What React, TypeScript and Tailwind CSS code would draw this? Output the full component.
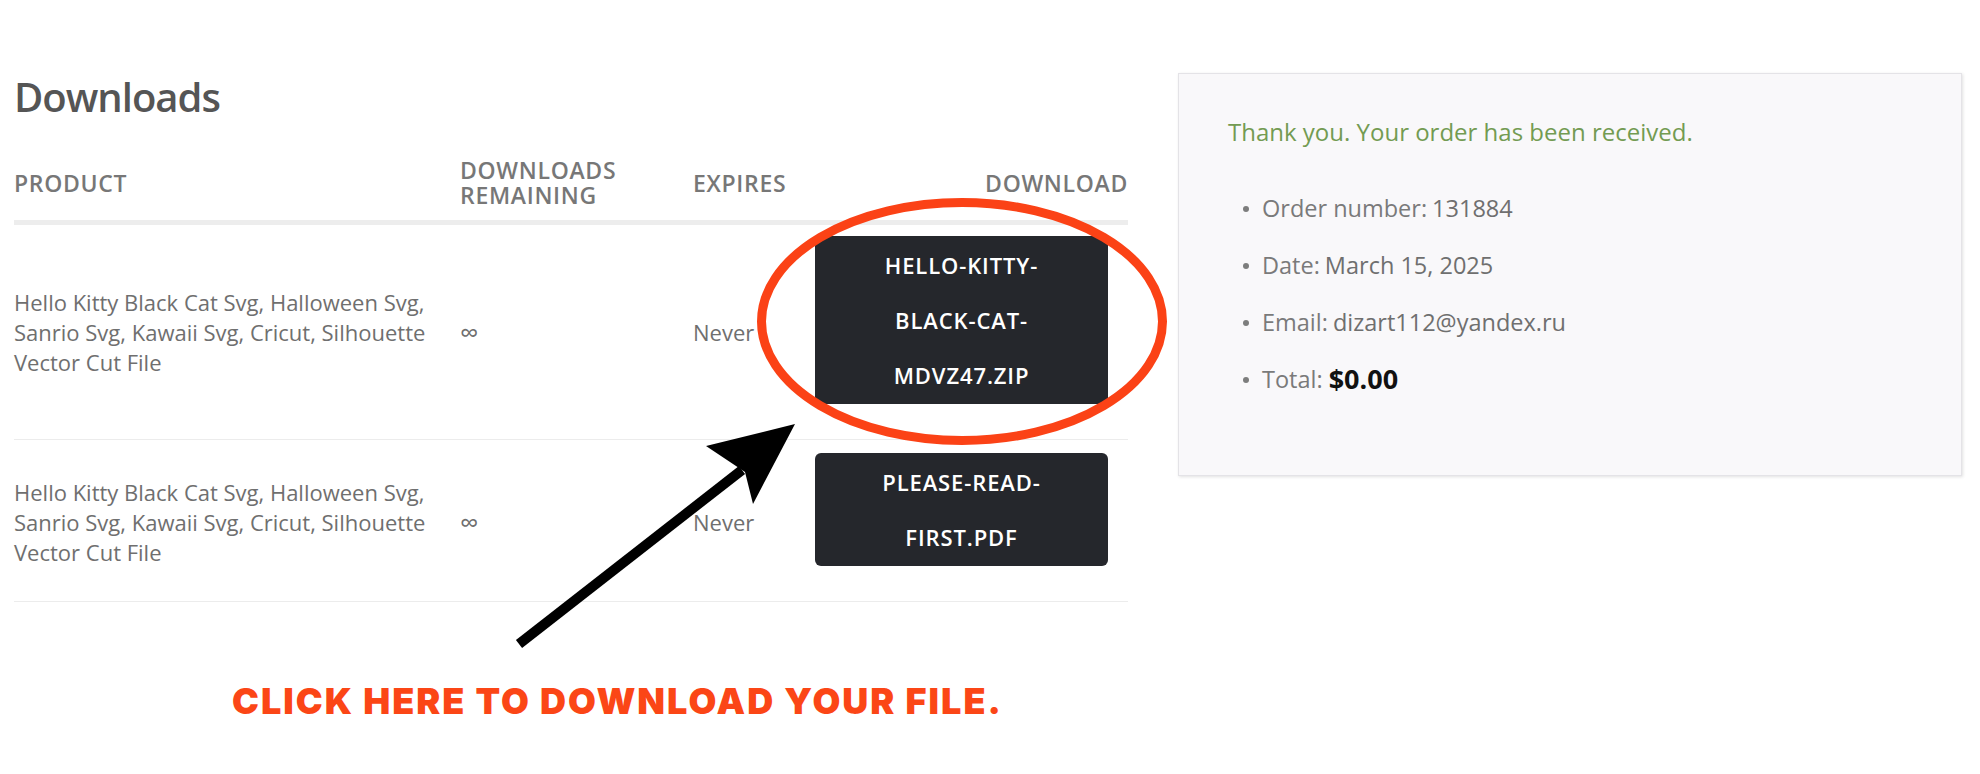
import React from "react";

const font = "font-['Open_Sans',sans-serif]";

function Row({ file, pt }: { file: string[]; pt: string }) {
  return (
    <div className={`grid grid-cols-[446px_233px_122px_313px] items-center border-b border-[#ececec] pb-[11px] ${pt}`}>
      <div className="w-[432px] text-[22px] leading-[30px] text-[#6f6f6f]">
        Hello Kitty Black Cat Svg, Halloween Svg, Sanrio Svg, Kawaii Svg, Cricut, Silhouette Vector Cut File
      </div>
      <div className="text-[26px] leading-[30px] text-[#6f6f6f]">∞</div>
      <div className="text-[22px] leading-[30px] text-[#6f6f6f]">Never</div>
      <div className="pb-6">
        <a
          href="#"
          className="block w-[293px] rounded-[6px] bg-[#25272c] py-[1.5px] text-center text-[22px] font-semibold leading-[55px] tracking-[0.04em] text-white"
        >
          {file.map((l) => (
            <div key={l}>{l}</div>
          ))}
        </a>
      </div>
    </div>
  );
}

function Item({ label, value, total }: { label: string; value: string; total?: boolean }) {
  return (
    <li className="flex h-[57px] items-center">
      <span className="ml-[15px] mr-[13px] h-[6px] w-[6px] rounded-full bg-[#7d7d7d]" />
      <span className="text-[23.5px] text-[#7a7a7a]">{label} </span>
      {total ? (
        <span className="ml-[6px] text-[27px] font-bold text-[#111]">{value}</span>
      ) : (
        <span className="ml-[5px] text-[23.5px] font-medium text-[#6f6f6f]">{value}</span>
      )}
    </li>
  );
}

export default function App() {
  return (
    <div className={`relative flex h-[774px] w-full overflow-hidden bg-white ${font}`}>
      <div className="w-[1128px] shrink-0 pl-[14px]">
        <h2 className="mb-[37px] mt-[73px] text-[40px] font-semibold leading-[48px] tracking-[-1px] text-[#555]">
          Downloads
        </h2>
        <div className="grid grid-cols-[446px_233px_122px_313px] items-center border-b-[5px] border-[#ededed] pb-3 text-[23px] font-semibold uppercase leading-[25px] tracking-[0.03em] text-[#777]">
          <div>Product</div>
          <div className="flex flex-col">
            <span className="h-[25px]">Downloads</span>
            <span className="h-[25px]">Remaining</span>
          </div>
          <div>Expires</div>
          <div className="text-right">Download</div>
        </div>
        <Row file={["HELLO-KITTY-", "BLACK-CAT-", "MDVZ47.ZIP"]} pt="pt-[11px]" />
        <Row file={["PLEASE-READ-", "FIRST.PDF"]} pt="pt-[13px]" />
        <div className="mt-[81px] pl-[218px] font-['Inter',sans-serif] text-[36px] font-black leading-[36px] tracking-[2px] text-[#fb4616]">
          CLICK HERE TO DOWNLOAD YOUR FILE.
        </div>
      </div>
      <div className="ml-[50px] mt-[73px] h-[403px] w-[784px] shrink-0 border border-[#e4e3e7] bg-[#f9f8fa] pl-[49px] pt-[40px] shadow-[1px_1px_3px_rgba(0,0,0,0.12)]">
        <p className="mb-[30px] text-[24px] font-medium leading-[36px] text-[#739b52]">
          Thank you. Your order has been received.
        </p>
        <ul>
          <Item label="Order number:" value="131884" />
          <Item label="Date:" value="March 15, 2025" />
          <Item label="Email:" value="dizart112@yandex.ru" />
          <Item label="Total:" value="$0.00" total />
        </ul>
      </div>
      <svg
        className="pointer-events-none absolute left-0 top-0"
        width="1980"
        height="774"
        viewBox="0 0 1980 774"
      >
        <ellipse cx="962" cy="321.5" rx="200.5" ry="119" fill="none" stroke="#fb4216" strokeWidth="9" />
        <line x1="519" y1="644" x2="742" y2="470" stroke="#000" strokeWidth="10" />
        <polygon points="795,424 706,446 745,472 753,504" fill="#000" />
      </svg>
    </div>
  );
}
